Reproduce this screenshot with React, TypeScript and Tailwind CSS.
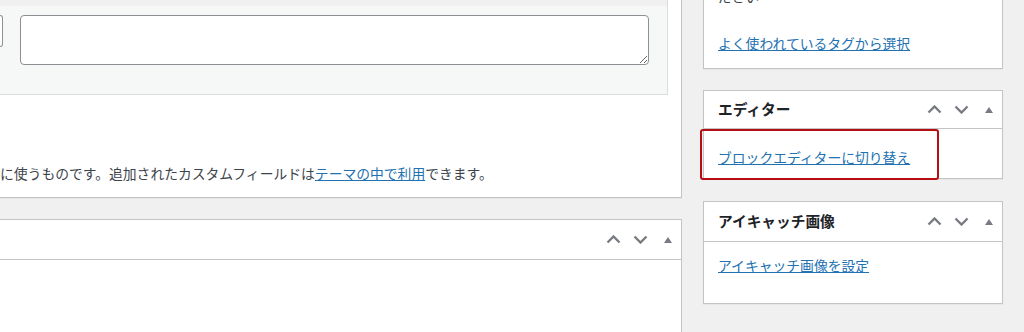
import React from "react";

const font = { fontFamily: '"Noto Sans CJK JP", "Noto Sans", sans-serif' };

function Up() {
  return (
    <svg width="15" height="9" viewBox="0 0 15 9">
      <polyline points="1.5,7.5 7.5,1.5 13.5,7.5" fill="none" stroke="#787c82" strokeWidth="2.4" />
    </svg>
  );
}
function Down() {
  return (
    <svg width="15" height="9" viewBox="0 0 15 9">
      <polyline points="1.5,1.5 7.5,7.5 13.5,1.5" fill="none" stroke="#787c82" strokeWidth="2.4" />
    </svg>
  );
}
function Tri() {
  return (
    <svg width="8" height="6" viewBox="0 0 8 6">
      <polygon points="4,0 8,6 0,6" fill="#787c82" />
    </svg>
  );
}

function Handles() {
  return (
    <div className="flex h-full">
      <div className="w-[27px] h-full flex items-center justify-center"><Up /></div>
      <div className="w-[27px] h-full flex items-center justify-center"><Down /></div>
      <div className="w-[27px] h-full flex items-center justify-center"><Tri /></div>
    </div>
  );
}

function Header({ title, h }: { title?: string; h: string }) {
  return (
    <div className={`flex items-center justify-between border-b border-[#c3c4c7] ${h}`}>
      <div className="pl-[14px] text-[14.7px] font-bold text-[#1d2327] leading-none">{title}</div>
      <Handles />
    </div>
  );
}

export default function App() {
  return (
    <div className="w-[1024px] h-[332px] overflow-hidden bg-[#f0f0f1] flex text-[13.8px] text-[#3c434a]" style={font}>
      {/* left column */}
      <div className="w-[682px] flex flex-col shrink-0">
        <div className="h-[198px] bg-white border-r border-b border-[#c3c4c7] shadow-[0_1px_1px_rgba(0,0,0,0.04)] flex flex-col">
          <div className="w-[668px] h-[95px] bg-[#f6f7f7] border-r border-b border-[#dcdcde] flex flex-col">
            <div className="h-[6px] bg-[#f0f0f1]" />
            <div className="flex items-start pt-[9px] gap-[17px]">
              <div className="w-[3px] h-[32px] bg-white border border-l-0 border-[#8c8f94] rounded-r-[4px]" />
              <textarea className="w-[629px] h-[50px] bg-white border border-[#8c8f94] rounded-[4px] outline-none" />
            </div>
          </div>
          <div className="mt-[68px] leading-[20px] whitespace-nowrap">
            に使うものです。追加されたカスタムフィールドは
            <a className="text-[#2271b1] underline">テーマの中で利用</a>
            できます。
          </div>
        </div>
        <div className="mt-[21px] flex-1 bg-white border-t border-r border-[#c3c4c7]">
          <Header h="h-[40px]" />
        </div>
      </div>

      {/* right column */}
      <div className="ml-[21px] w-[300px] flex flex-col shrink-0">
        <div className="h-[69px] bg-white border-l border-r border-b border-[#c3c4c7] shadow-[0_1px_1px_rgba(0,0,0,0.04)] pl-[14px] overflow-hidden">
          <div className="mt-[-14px] leading-[20px]">ださい</div>
          <div className="mt-[27px] leading-[20px]">
            <a className="text-[#2271b1] underline">よく使われているタグから選択</a>
          </div>
        </div>

        <div className="relative mt-[21px] h-[89px] bg-white border border-[#c3c4c7] shadow-[0_1px_1px_rgba(0,0,0,0.04)]">
          <Header title="エディター" h="h-[38px]" />
          <div className="pl-[14px] pt-[18px] leading-[20px]">
            <a className="text-[#2271b1] underline">ブロックエディターに切り替え</a>
          </div>
          <div className="absolute left-[-4px] top-[38px] w-[239px] h-[51px] border-2 border-[#b50d12] rounded-[3px]" />
        </div>

        <div className="mt-[22px] h-[103px] bg-white border border-[#c3c4c7] shadow-[0_1px_1px_rgba(0,0,0,0.04)]">
          <Header title="アイキャッチ画像" h="h-[40px]" />
          <div className="pl-[14px] pt-[13px] leading-[20px]">
            <a className="text-[#2271b1] underline">アイキャッチ画像を設定</a>
          </div>
        </div>
      </div>
    </div>
  );
}
